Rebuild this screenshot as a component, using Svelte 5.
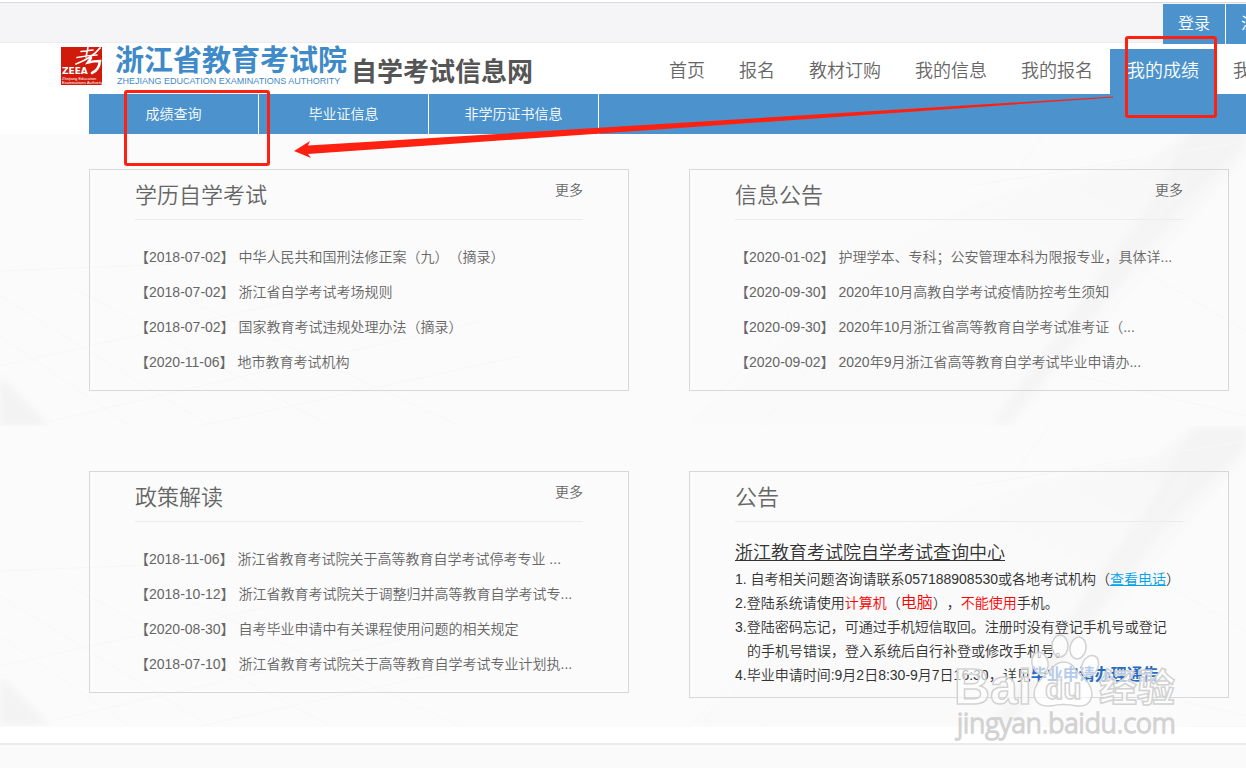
<script lang="ts">
  type Item = { date: string; title: string };
  type Panel = { title: string; items: Item[] };

  const nav = ['首页', '报名', '教材订购', '我的信息', '我的报名', '我的成绩', '我的'];
  const subnav = ['成绩查询', '毕业证信息', '非学历证书信息'];

  let active = $state('我的成绩');

  const panels: Panel[] = [
    {
      title: '学历自学考试',
      items: [
        { date: '2018-07-02', title: '中华人民共和国刑法修正案（九）（摘录）' },
        { date: '2018-07-02', title: '浙江省自学考试考场规则' },
        { date: '2018-07-02', title: '国家教育考试违规处理办法（摘录）' },
        { date: '2020-11-06', title: '地市教育考试机构' }
      ]
    },
    {
      title: '信息公告',
      items: [
        { date: '2020-01-02', title: '护理学本、专科；公安管理本科为限报专业，具体详...' },
        { date: '2020-09-30', title: '2020年10月高教自学考试疫情防控考生须知' },
        { date: '2020-09-30', title: '2020年10月浙江省高等教育自学考试准考证（...' },
        { date: '2020-09-02', title: '2020年9月浙江省高等教育自学考试毕业申请办...' }
      ]
    },
    {
      title: '政策解读',
      items: [
        { date: '2018-11-06', title: '浙江省教育考试院关于高等教育自学考试停考专业 ...' },
        { date: '2018-10-12', title: '浙江省教育考试院关于调整归并高等教育自学考试专...' },
        { date: '2020-08-30', title: '自考毕业申请中有关课程使用问题的相关规定' },
        { date: '2018-07-10', title: '浙江省教育考试院关于高等教育自学考试专业计划执...' }
      ]
    }
  ];
</script>

<div class="page">
  <div class="topbar">
    <div class="account">
      <a href="#login">登录</a>
      <a href="#register">注册</a>
    </div>
  </div>

  <header class="header">
    <a class="brand" href="#home">
      <svg class="mark" viewBox="0 0 41 38" aria-hidden="true">
        <rect width="41" height="38" fill="#cf1a0c" />
        <g fill="none" stroke="#fff" stroke-linecap="round">
          <path d="M20 4.500l12-1.500M27 0l-2 10M16 10.500q10-2 20-2.500" stroke-width="1.600" />
          <path d="M39 1Q31 11 15 17" stroke-width="1.800" />
          <path d="M30 11l-3 4.500q6-1.500 12-1.500q-1 9-8 12" stroke-width="2.600" />
        </g>
        <text x="1" y="27" class="mark-name">ZEEA</text>
        <text x="1" y="33" class="mark-small">Zhejiang Education</text>
        <text x="1" y="37" class="mark-small">Examinations Authority</text>
      </svg>
      <span class="brand-names">
        <span class="brand-cn">浙江省教育考试院</span>
        <span class="brand-en">ZHEJIANG EDUCATION EXAMINATIONS AUTHORITY</span>
      </span>
      <span class="brand-sub">自学考试信息网</span>
    </a>
    <nav class="nav">
      {#each nav as name}
        <a href="#nav" class:active={active === name} onclick={() => (active = name)}>{name}</a>
      {/each}
    </nav>
  </header>

  <nav class="subnav">
    {#each subnav as name}
      <a href="#sub">{name}</a>
    {/each}
  </nav>

  <main class="content">
    <svg class="texture" aria-hidden="true">
      <defs>
        <linearGradient id="beam" x1="1" y1="0" x2="0" y2="1">
          <stop offset="0" stop-color="#f3f3f3" />
          <stop offset="0.500" stop-color="#f9f9f9" />
          <stop offset="1" stop-color="#f8f8f8" />
        </linearGradient>
        <filter id="soft">
          <feGaussianBlur stdDeviation="4" />
        </filter>
        <pattern id="building" width="1246" height="300" y="-8" patternUnits="userSpaceOnUse">
          <g filter="url(#soft)">
            <path d="M1195 0h51v25L1120 180L1010 300H690L900 120Q980 60 1150 35z" fill="url(#beam)" opacity="0.7" />
            <path d="M1195 0h51v18Q1195 60 1130 145L1010 300h-20L1150 80z" fill="#f2f2f2" opacity="0.6" />
            <path d="M0 250L50 300H0z" fill="#f3f3f3" />
          </g>
          <g fill="none" stroke="#f7f7f7">
            <path d="M0 170L210 300M0 210L130 300M70 160L330 300M180 170L460 300" />
            <path d="M0 240L360 160M30 300L480 195M200 300L520 230" />
            <path d="M0 145L250 135M690 300L790 190M760 300L870 170M970 60L1246 15" />
            <path d="M1100 120L1246 205M1080 250L1246 290M1050 0L1020 40" />
          </g>
        </pattern>
      </defs>
      <rect width="100%" height="100%" fill="url(#building)" />
    </svg>

    {#each panels as panel}
      <section class="panel">
        <div class="panel-head">
          <h2>{panel.title}</h2>
          <a class="more" href="#more">更多</a>
        </div>
        <ul>
          {#each panel.items as item}
            <li><a href="#item">【{item.date}】 {item.title}</a></li>
          {/each}
        </ul>
      </section>
    {/each}

    <section class="panel">
      <div class="panel-head">
        <h2>公告</h2>
      </div>
      <div class="notice">
        <h3><a href="#center">浙江教育考试院自学考试查询中心</a></h3>
        <p>1. 自考相关问题咨询请联系057188908530或各地考试机构（<a class="phone" href="#phone">查看电话</a>）</p>
        <p>2.登陆系统请使用<em>计算机</em>（<em class="big">电脑</em>），<em>不能使用</em>手机。</p>
        <p class="hanging">3.登陆密码忘记，可通过手机短信取回。注册时没有登记手机号或登记<br />的手机号错误，登入系统后自行补登或修改手机号。</p>
        <p>4.毕业申请时间:9月2日8:30-9月7日16:30，详见<a class="apply" href="#apply">毕业申请办理通告</a></p>
      </div>
    </section>
  </main>

  <footer class="footer"></footer>

  <div class="frame frame-query"></div>
  <div class="frame frame-score"></div>
  <svg class="arrow" width="820" height="64" viewBox="0 0 820 64" aria-hidden="true">
    <path d="M0 56L16 46L14 50.500L819 1.500L819 2.500L14 59L17 63z" fill="#fe2111" />
  </svg>

  <svg class="watermark" width="230" height="112" viewBox="0 0 230 112" aria-hidden="true">
    <g fill="#fff" fill-opacity="0.65" stroke="#d2d2d2" stroke-width="1.500">
      <ellipse cx="88" cy="33" rx="8" ry="11" transform="rotate(-15 88 33)" />
      <ellipse cx="108" cy="16" rx="8" ry="11" />
      <ellipse cx="126" cy="18" rx="8" ry="11" transform="rotate(10 126 18)" />
      <ellipse cx="138" cy="36" rx="8" ry="11" transform="rotate(25 138 36)" />
      <path d="M112 32q8 0 13 10q15 11 15 22q-1 13-15 12q-14-3-26 0q-16 1-17-12q0-11 15-22q6-10 15-10z" />
      <text x="2" y="74" class="wm-name">Bai</text>
      <text x="93" y="69" class="wm-du">du</text>
      <text x="147" y="71" class="wm-cn">经验</text>
      <text x="5" y="103" class="wm-url">jingyan.baidu.com</text>
    </g>
  </svg>
</div>

<style>
  :global(body) {
    margin: 0;
    background: #fff;
  }

  .page {
    position: relative;
    display: flex;
    flex-direction: column;
    min-height: 100vh;
    padding-top: 2px;
    box-sizing: border-box;
    overflow: hidden;
    font-family: 'Liberation Sans', 'Noto Sans CJK SC', sans-serif;
    font-size: 14px;
    font-weight: 350;
    color: #666;
    text-spacing-trim: space-all;
  }

  a {
    color: inherit;
    text-decoration: none;
  }

  .topbar {
    display: flex;
    justify-content: flex-end;
    height: 39px;
    background: #f5f5f8;
    border-top: 1px solid #d9dade;
    border-bottom: 1px solid #ececec;
  }

  .account {
    display: flex;
    width: 83px;
    height: 40px;
    margin-top: 1px;
    overflow: hidden;
  }

  .account a {
    flex: none;
    padding: 0 15px;
    background: #4c93cd;
    border-right: 1px solid #fff;
    color: #fff;
    font-size: 16px;
    line-height: 40px;
  }

  .header {
    display: flex;
    justify-content: space-between;
    align-items: flex-end;
    height: 51px;
    padding-left: 61px;
  }

  .brand {
    display: flex;
    flex: none;
    align-self: flex-start;
    padding-top: 4px;
  }

  .mark {
    width: 41px;
    height: 38px;
  }

  .mark-name {
    fill: #fff;
    font-family: 'DejaVu Sans', sans-serif;
    font-size: 9px;
    font-weight: 700;
  }

  .mark-small {
    fill: #fff;
    font-size: 4px;
  }

  .brand-names {
    display: flex;
    flex-direction: column;
    margin-left: 13px;
    color: #3f8ac8;
  }

  .brand-cn {
    font-size: 29px;
    font-weight: 700;
    line-height: 28px;
  }

  .brand-en {
    padding-left: 2px;
    font-size: 9px;
    line-height: 12px;
  }

  .brand-sub {
    margin: 10px 0 0 4px;
    color: #555;
    font-size: 26px;
    font-weight: 700;
    line-height: 30px;
  }

  .nav {
    display: flex;
    flex: 0 0 594px;
    overflow: hidden;
  }

  .nav a {
    flex: none;
    padding: 0 17px;
    font-size: 18px;
    line-height: 45px;
  }

  .nav a.active {
    background: #4c93cd;
    color: #fff;
  }

  .subnav {
    display: flex;
    height: 40px;
    margin-left: 89px;
    background: #4c93cd;
  }

  .subnav a {
    width: 170px;
    box-sizing: border-box;
    border-right: 1px solid #fff;
    color: #fff;
    line-height: 40px;
    text-align: center;
  }

  .content {
    position: relative;
    display: grid;
    grid-template-columns: 1fr 1fr;
    align-items: start;
    gap: 80px 60px;
    padding: 35px 17px 29px 89px;
    background: #fbfbfb;
  }

  .texture {
    position: absolute;
    inset: 0;
    width: 100%;
    height: 100%;
  }

  .panel {
    position: relative;
    padding: 0 45px 10px;
    border: 1px solid #d8d8d8;
  }

  .panel-head {
    display: flex;
    justify-content: space-between;
    height: 49px;
    border-bottom: 1px solid #ececec;
  }

  h2 {
    margin: 0;
    font-size: 22px;
    font-weight: 350;
    line-height: 52px;
  }

  .more {
    line-height: 40px;
  }

  ul {
    margin: 0;
    padding: 20px 0 0;
    list-style: none;
  }

  li {
    line-height: 35px;
    white-space: nowrap;
  }

  .notice {
    padding-top: 18px;
    color: #333;
    line-height: 24px;
    white-space: nowrap;
  }

  h3 {
    margin: 0;
    font-size: 18px;
    font-weight: 350;
    line-height: 27px;
  }

  h3 a {
    text-decoration: underline;
  }

  p {
    height: 24px;
    margin: 0;
  }

  .hanging {
    height: 48px;
    padding-left: 12px;
    text-indent: -12px;
  }

  em {
    color: #f00;
    font-style: normal;
  }

  .big {
    font-size: 16px;
  }

  .phone {
    color: #00a2e8;
    text-decoration: underline;
  }

  .apply {
    color: #2a6cc4;
    font-size: 16px;
    font-weight: 700;
  }

  .footer {
    flex: 1;
    margin-top: 16px;
    background: #fafafa;
    border-top: 2px solid #ebebeb;
  }

  .frame {
    position: absolute;
    box-sizing: border-box;
    border: 3px solid #fe2111;
    border-radius: 3px;
  }

  .frame-query {
    left: 124px;
    top: 90px;
    width: 146px;
    height: 76px;
  }

  .frame-score {
    left: 1125px;
    top: 36px;
    width: 92px;
    height: 82px;
  }

  .arrow {
    position: absolute;
    left: 294px;
    top: 95px;
  }

  .watermark {
    position: absolute;
    left: 952px;
    top: 630px;
    pointer-events: none;
  }

  .wm-name {
    font-size: 50px;
    font-weight: 700;
  }

  .wm-du {
    font-size: 30px;
    font-weight: 700;
  }

  .wm-cn {
    font-size: 38px;
    font-weight: 700;
  }

  .wm-url {
    font-family: 'Open Sans', sans-serif;
    font-size: 27px;
  }
</style>
